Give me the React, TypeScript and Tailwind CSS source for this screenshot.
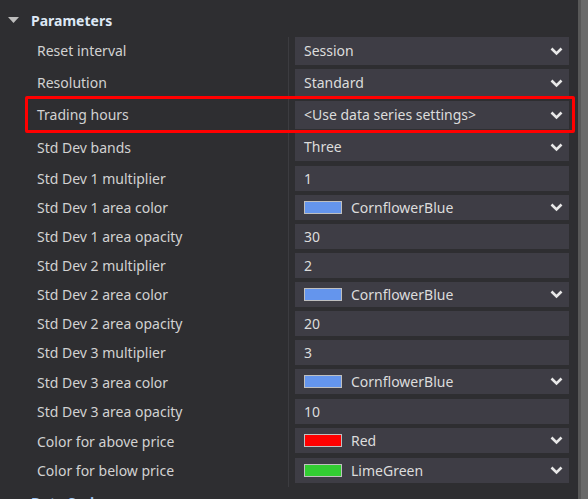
import React from "react";

type Row = {
  label: string;
  value: string;
  kind: "select" | "text" | "color";
  swatch?: string;
  h: string;
  box: string;
};

const BIG = "h-[28px]";
const SMALL = "h-[25px]";

const rows: Row[] = [
  { label: "Reset interval", value: "Session", kind: "select", h: "h-[32px]", box: BIG },
  { label: "Resolution", value: "Standard", kind: "select", h: "h-[32px]", box: BIG },
  { label: "Trading hours", value: "<Use data series settings>", kind: "select", h: "h-[32px]", box: BIG },
  { label: "Std Dev bands", value: "Three", kind: "select", h: "h-[33px]", box: BIG },
  { label: "Std Dev 1 multiplier", value: "1", kind: "text", h: "h-[29px]", box: SMALL },
  { label: "Std Dev 1 area color", value: "CornflowerBlue", kind: "color", swatch: "#6495ed", h: "h-[29px]", box: SMALL },
  { label: "Std Dev 1 area opacity", value: "30", kind: "text", h: "h-[29px]", box: SMALL },
  { label: "Std Dev 2 multiplier", value: "2", kind: "text", h: "h-[29px]", box: SMALL },
  { label: "Std Dev 2 area color", value: "CornflowerBlue", kind: "color", swatch: "#6495ed", h: "h-[29px]", box: SMALL },
  { label: "Std Dev 2 area opacity", value: "20", kind: "text", h: "h-[29px]", box: SMALL },
  { label: "Std Dev 3 multiplier", value: "3", kind: "text", h: "h-[29px]", box: SMALL },
  { label: "Std Dev 3 area color", value: "CornflowerBlue", kind: "color", swatch: "#6495ed", h: "h-[30px]", box: SMALL },
  { label: "Std Dev 3 area opacity", value: "10", kind: "text", h: "h-[29px]", box: SMALL },
  { label: "Color for above price", value: "Red", kind: "color", swatch: "#ff0000", h: "h-[30px]", box: SMALL },
  { label: "Color for below price", value: "LimeGreen", kind: "color", swatch: "#32cd32", h: "h-[29px]", box: SMALL },
];

function Chevron() {
  return (
    <svg width="13" height="9" viewBox="0 0 13 9" className="shrink-0">
      <polyline
        points="1.5,1.5 6.5,6.5 11.5,1.5"
        fill="none"
        stroke="#e8e8e8"
        strokeWidth="2.6"
      />
    </svg>
  );
}

function Caret() {
  return (
    <svg width="11" height="7" viewBox="0 0 11 7" className="shrink-0">
      <polygon points="0,0 11,0 5.5,6" fill="#bdbdbd" />
    </svg>
  );
}

function Field({ row }: { row: Row }) {
  return (
    <div
      className={
        "flex items-center bg-[#3e3d45] pl-[9px] pr-[6px] text-[#dcdcdc] " + row.box
      }
    >
      {row.kind === "color" ? (
        <span
          className="mr-[9px] h-[13px] w-[38px] shrink-0 border border-[#bfbfbf]"
          style={{ backgroundColor: row.swatch }}
        />
      ) : null}
      <span className="flex-1 whitespace-nowrap">{row.value}</span>
      {row.kind !== "text" ? <Chevron /> : null}
    </div>
  );
}

export default function App() {
  return (
    <div
      className="relative h-[499px] w-[588px] overflow-hidden bg-[#2e2e31] text-[14px] leading-[18px]"
      style={{ fontFamily: '"Segoe UI", "Noto Sans", "Open Sans", sans-serif' }}
    >
      <div className="flex h-full">
        <div className="flex-1">
          <div className="flex h-[37px] items-center gap-[12px] pl-[8px] pb-[1px] pt-[5px]">
            <Caret />
            <span className="font-bold text-[#dde8f5]">Parameters</span>
          </div>

          <div className="flex">
            <div className="w-[289px] border-r border-[#3c3c40]">
              {rows.map((row, i) => (
                <div
                  key={row.label}
                  className={
                    "flex items-center pl-[37px] text-[#d2d2d2] " +
                    (i < 4 ? "pb-[4px] " : "pb-[3px] ") +
                    row.h
                  }
                >
                  {row.label}
                </div>
              ))}
            </div>
            <div className="w-[280px] pl-[6px]">
              {rows.map((row) => (
                <div key={row.label} className={row.h}>
                  <Field row={row} />
                </div>
              ))}
            </div>
          </div>

          <div className="flex items-center gap-[12px] pl-[8px] pt-[7px]">
            <Caret />
            <span className="font-bold text-[#9ec4f0]">Data Series</span>
          </div>
        </div>

        <div className="ml-[9px] w-[10px] border-l-[3px] border-[#585858] bg-[#6a6a6a]" />
      </div>

      <div className="absolute left-[25px] top-[96px] h-[37px] w-[550px] rounded-[2px] border-[3px] border-[#ff0000]" />
    </div>
  );
}
